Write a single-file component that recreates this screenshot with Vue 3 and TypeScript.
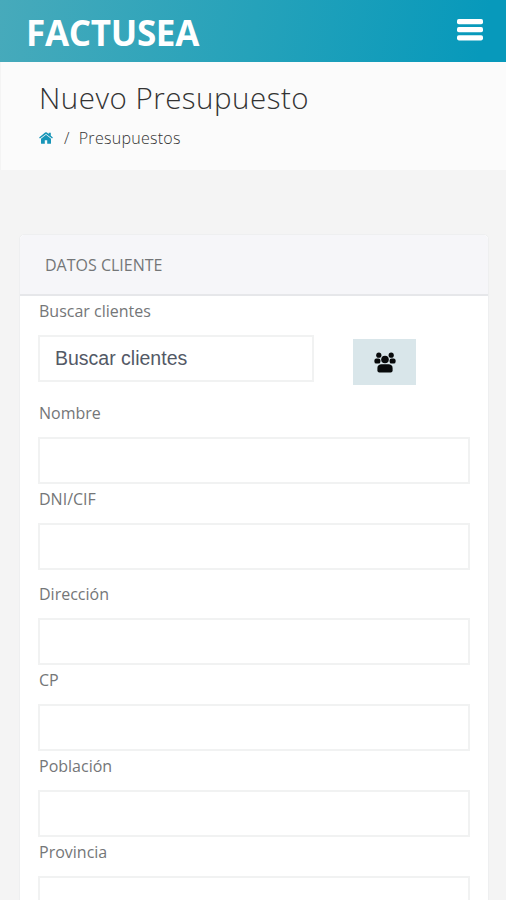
<script setup lang="ts">
import { ref } from 'vue'

interface Field {
  id: string
  label: string
  spaced?: boolean
}

const fields: Field[] = [
  { id: 'nombre', label: 'Nombre' },
  { id: 'dni', label: 'DNI/CIF' },
  { id: 'direccion', label: 'Dirección', spaced: true },
  { id: 'cp', label: 'CP' },
  { id: 'poblacion', label: 'Población' },
  { id: 'provincia', label: 'Provincia' },
]

const values = ref<Record<string, string>>({})
const search = ref('')
</script>

<template>
  <div class="page">
    <header class="topbar">
      <span class="brand">FACTUSEA</span>
      <button class="menu" type="button">
        <svg width="26" height="22" viewBox="0 0 26 22">
          <rect x="0" y="0" width="26" height="5.2" rx="1.8" />
          <rect x="0" y="8.1" width="26" height="5.2" rx="1.8" />
          <rect x="0" y="16.2" width="26" height="5.2" rx="1.8" />
        </svg>
      </button>
    </header>

    <section class="heading">
      <h1>Nuevo Presupuesto</h1>
      <nav class="crumbs">
        <svg class="home" width="14" height="12" viewBox="0 0 14 12">
          <path d="M7 2.7 L2 6.8 V11.2 Q2 11.8 2.6 11.8 H5.8 V8.2 H8.2 V11.8 H11.4 Q12 11.8 12 11.2 V6.8 Z" />
          <path d="M7 0.2 Q7.5 0.2 7.9 0.5 L9.7 2 V0.7 H11.8 V3.7 L13.9 5.5 L13.1 6.5 L7 1.9 L0.9 6.5 L0.1 5.5 L6.1 0.5 Q6.5 0.2 7 0.2 Z" />
        </svg>
        <span class="slash">/</span>
        <span class="crumb">Presupuestos</span>
      </nav>
    </section>

    <main class="card">
      <h2 class="card-title">DATOS CLIENTE</h2>
      <div class="card-body">
        <label class="label" for="buscar">Buscar clientes</label>
        <div class="search-row">
          <input id="buscar" v-model="search" class="input search" placeholder="Buscar clientes" />
          <button class="clients" type="button">
            <svg width="22" height="21" viewBox="0 0 22 21">
              <circle cx="4.8" cy="3.2" r="2.6" />
              <circle cx="17.2" cy="3.2" r="2.6" />
              <rect x="0.4" y="6.6" width="6" height="5" rx="1.9" />
              <rect x="15.6" y="6.6" width="6" height="5" rx="1.9" />
              <circle cx="11" cy="7.5" r="3.8" />
              <path d="M7 12.2 H15 Q18.6 12.6 18.6 16 V18.4 Q18.6 20.4 16.6 20.4 H5.4 Q3.4 20.4 3.4 18.4 V16 Q3.4 12.6 7 12.2 Z" />
            </svg>
          </button>
        </div>
        <div v-for="f in fields" :key="f.id" class="field" :class="{ spaced: f.spaced }">
          <label class="label" :for="f.id">{{ f.label }}</label>
          <input :id="f.id" v-model="values[f.id]" class="input" />
        </div>
      </div>
    </main>
  </div>
</template>

<style>
body {
  overflow: hidden;
}
</style>

<style scoped>
.page {
  box-sizing: border-box;
  height: 900px;
  overflow: hidden;
  background: #f4f4f4;
  font-family: "Open Sans", "Noto Sans", sans-serif;
  color: #747678;
}
.topbar {
  box-sizing: border-box;
  display: flex;
  align-items: center;
  justify-content: space-between;
  height: 62px;
  padding: 0 23px 0 26px;
  background: linear-gradient(100deg, #47aabb 0%, #25a2ba 50%, #0799bb 95%);
}
.brand {
  padding-top: 3px;
  font-size: 35px;
  font-weight: 700;
  line-height: 1;
  letter-spacing: -0.3px;
  color: #fff;
}
.menu {
  display: flex;
  padding: 0;
  margin-bottom: 2px;
  border: 0;
  background: none;
  fill: #fff;
}
.heading {
  box-sizing: border-box;
  height: 108px;
  padding: 15px 39px 0;
  border-left: 1px solid #f4f4f4;
  background: #fbfbfb;
}
h1 {
  margin: 0 0 0 -1px;
  font-size: 29.5px;
  font-weight: 300;
  line-height: 41px;
  letter-spacing: 0.5px;
  color: #333;
}
.crumbs {
  display: flex;
  align-items: center;
  height: 22px;
  margin: 9px 0 0 -1px;
  font-size: 16px;
  font-weight: 300;
  letter-spacing: 0.28px;
  color: #333;
}
.home {
  fill: #1795b8;
}
.slash {
  margin: 0 9px 0 11px;
}
.card {
  box-sizing: border-box;
  width: 470px;
  margin: 64px 0 0 19px;
  border: 1px solid #eeeff0;
  border-radius: 5px;
  background: #fff;
}
.card-title {
  box-sizing: border-box;
  height: 61px;
  margin: 0;
  padding: 0 25px;
  border-bottom: 2px solid #e6e7ea;
  border-radius: 5px 5px 0 0;
  background: #f6f6f9;
  font-size: 16px;
  font-weight: 400;
  line-height: 60px;
}
.card-body {
  padding: 0 19px 0 18px;
}
.label {
  display: block;
  height: 39px;
  padding-left: 1px;
  font-size: 16px;
  line-height: 31px;
}
.input {
  box-sizing: border-box;
  display: block;
  width: 432px;
  height: 47px;
  padding: 0 15px;
  border: 2px solid #f1f2f2;
  outline: 0;
  background: #fff;
  font-family: "Liberation Sans", Arial, sans-serif;
  font-size: 19.5px;
  color: #535966;
}
.input::placeholder {
  color: #535966;
  opacity: 1;
}
.search-row {
  display: flex;
  gap: 39px;
  height: 63px;
}
.search {
  width: 276px;
}
.clients {
  display: flex;
  align-items: center;
  justify-content: center;
  width: 63px;
  height: 46px;
  margin-top: 4px;
  padding: 0;
  border: 0;
  background: #d9e6ea;
  fill: #080a0b;
}
.spaced {
  margin-top: 9px;
}
</style>
